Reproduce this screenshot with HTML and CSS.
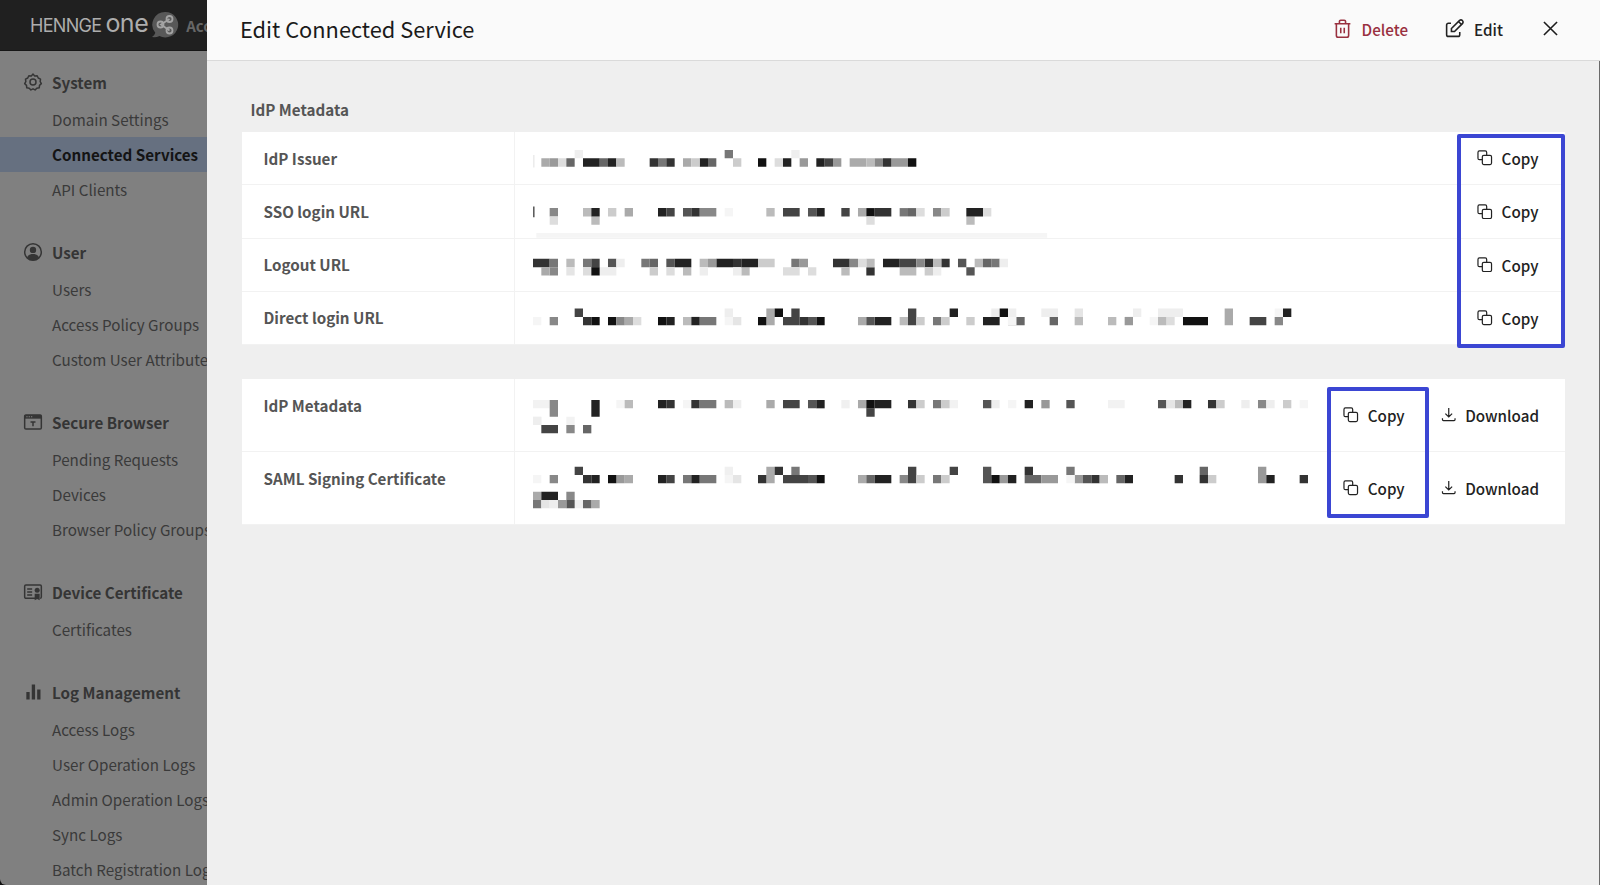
FILE: index.html
```html
<!DOCTYPE html>
<html lang="en">
<head>
<meta charset="utf-8">
<title>Edit Connected Service</title>
<link rel="stylesheet" href="styles.css">
</head>
<body>
<aside class="sidebar">
  <header class="brand">
    <span class="brand-henn">HENNGE</span><span class="brand-one">one</span>
    <svg class="brand-mark" viewBox="0 0 28 28" width="28" height="28"><path class="mark-bg" d="M14.5 1a12.7 12.7 0 1 1-6 23.9Q5 26.6 1 26q2.6-1.3 3.3-4.2A12.7 12.7 0 0 1 14.5 1z"/><path class="mark-line" d="M18.5 8 10 13.5l8.500 6"/><circle class="mark-line" cx="18.500" cy="8" r="3"/><circle class="mark-line" cx="9.500" cy="13.500" r="3"/><circle class="mark-line" cx="18.500" cy="19.500" r="3"/></svg>
    <span class="brand-app">Access</span>
  </header>
  <nav class="nav">
    <section class="group">
      <h2 class="group-head"><svg class="nav-icon" viewBox="0 0 24 24"><path class="line" d="M12 2.500l2 2.200 3-.2 1.300 2.700 2.700 1.400-.4 2.900 1.400 2.500-2.200 2-.3 3-3 .4-2 2.100-2.500-1.300-2.500 1.300-2-2.100-3-.4-.3-3-2.200-2 1.400-2.500-.4-2.900 2.700-1.400L7 4.500l3 .2z"/><circle class="line" cx="12" cy="12" r="3.600"/></svg>System</h2>
      <a class="nav-item">Domain Settings</a>
      <a class="nav-item active">Connected Services</a>
      <a class="nav-item">API Clients</a>
    </section>
    <section class="group">
      <h2 class="group-head"><svg class="nav-icon" viewBox="0 0 24 24"><circle class="line" cx="12" cy="12" r="10"/><circle class="solid" cx="12" cy="9.500" r="3.800"/><path class="solid" d="M4.800 18.500C6 15.500 9 14.500 12 14.500s6 1 7.200 4C17.500 20.700 15 22 12 22s-5.500-1.300-7.200-3.500z"/></svg>User</h2>
      <a class="nav-item">Users</a>
      <a class="nav-item">Access Policy Groups</a>
      <a class="nav-item">Custom User Attributes</a>
    </section>
    <section class="group">
      <h2 class="group-head"><svg class="nav-icon" viewBox="0 0 24 24"><rect class="line" x="2" y="3.500" width="20" height="17" rx="1.500"/><path class="solid" d="M2 3.500h20v4.500H2z"/><path class="dots" d="M4 5.700h1.500M6.800 5.700h1.500M9.600 5.700h1.500"/><path class="line" d="M9 12h6M12 12v5"/></svg>Secure Browser</h2>
      <a class="nav-item">Pending Requests</a>
      <a class="nav-item">Devices</a>
      <a class="nav-item">Browser Policy Groups</a>
    </section>
    <section class="group">
      <h2 class="group-head"><svg class="nav-icon" viewBox="0 0 24 24"><path class="line" d="M15 19.500H3.500A1.500 1.500 0 0 1 2 18V5a1.500 1.500 0 0 1 1.500-1.500h17A1.500 1.500 0 0 1 22 5v13a1.500 1.500 0 0 1-1.500 1.500"/><path class="line" d="M5 8.500h6M5 12h6M5 15.500h6"/><circle class="solid" cx="17" cy="10" r="3"/><path class="solid" d="M14 14h6v8l-3-1.500-3 1.500z"/></svg>Device Certificate</h2>
      <a class="nav-item">Certificates</a>
    </section>
    <section class="group">
      <h2 class="group-head"><svg class="nav-icon" viewBox="0 0 24 24"><path class="solid" d="M4 12h4v9H4zM10.500 3h4v18h-4zM17 9h4v12h-4z"/></svg>Log Management</h2>
      <a class="nav-item">Access Logs</a>
      <a class="nav-item">User Operation Logs</a>
      <a class="nav-item">Admin Operation Logs</a>
      <a class="nav-item">Sync Logs</a>
      <a class="nav-item">Batch Registration Logs</a>
    </section>
  </nav>
</aside>

<div class="drawer">
  <header class="drawer-head">
    <h1 class="drawer-title">Edit Connected Service</h1>
    <button class="head-btn danger"><svg class="icon-lg" viewBox="0 0 24 24"><path d="M3 6.500h18M8.500 6.500V4a1.500 1.500 0 0 1 1.500-1.500h4A1.500 1.500 0 0 1 15.500 4v2.500M5 6.500V20a2 2 0 0 0 2 2h10a2 2 0 0 0 2-2V6.500M10 11v6.500M14 11v6.500"/></svg>Delete</button>
    <button class="head-btn"><svg class="icon-lg" viewBox="0 0 24 24"><path d="M8 6H5a2 2 0 0 0-2 2v11a2 2 0 0 0 2 2h11a2 2 0 0 0 2-2v-3"/><path d="M21.300 6.200a2.500 2.500 0 0 0-3.500-3.500L8.500 12v3.500H12z"/><path d="M16.500 4l3.500 3.500"/></svg>Edit</button>
    <button class="close-btn" aria-label="Close"><svg class="icon-lg" viewBox="0 0 24 24"><path d="M4.500 4.500l15 15M19.500 4.500l-15 15"/></svg></button>
  </header>
  <main class="drawer-body">
    <h2 class="section-title">IdP Metadata</h2>

    <div class="panel">
      <div class="row">
        <div class="row-label">IdP Issuer</div>
        <div class="row-value"><svg class="mosaic" viewBox="0 -2.160 95 6.270"><path stroke="#e8e8e8" class="hair" d="M.1 .6v1.500"/><path stroke="#eee" d="M5 .5h1M31 .5h1"/><path stroke="#777" d="M23 .5h1M15 1.500h1"/><path stroke="#aaa" d="M1 1.500h1M18 1.500h1M38 1.500h2"/><path stroke="#999" d="M2 1.500h1M32 1.500h1M36 1.500h1M43 1.500h2"/><path stroke="#ddd" d="M3 1.500h1M29 1.500h1"/><path stroke="#666" d="M4 1.500h1M8 1.500h1M21 1.500h1"/><path stroke="#222" d="M6 1.500h2M9 1.500h1M20 1.500h1M30 1.500h1M34 1.500h1"/><path stroke="#111" d="M27 1.500h1M45 1.500h1"/><path stroke="#bbb" d="M10 1.500h1M40 1.500h1"/><path stroke="#333" d="M14 1.500h1M16 1.500h1M42 1.500h1"/><path stroke="#ccc" d="M19 1.500h1M24 1.500h1"/><path stroke="#444" d="M35 1.500h1"/><path stroke="#888" d="M41 1.500h1"/></svg></div>
        <button class="row-btn"><svg class="icon" viewBox="0 0 16 16"><path d="M5.500 10H2.500A1.500 1.500 0 0 1 1 8.500V2.500A1.500 1.500 0 0 1 2.500 1h6A1.500 1.500 0 0 1 10 2.500V5.500"/><rect x="5.500" y="5.500" width="9.500" height="9.500" rx="1.500"/></svg>Copy</button>
      </div>
      <div class="row">
        <div class="row-label">SSO login URL</div>
        <div class="row-value"><svg class="mosaic" viewBox="0 4.230 95 6.270"><path stroke="#f5f5f5" class="strip" d="M.4 10.280H61.700"/><path stroke="#333" class="hair" d="M.1 6.800v1.300"/><path stroke="#888" d="M2 7.500h1M20 7.500h2M48 7.500h1"/><path stroke="#bbb" d="M6 7.500h1M28 7.500h1M7 8.500h1M52 8.500h1"/><path stroke="#222" d="M7 7.500h1M15 7.500h1M34 7.500h1M52 7.500h2"/><path stroke="#ccc" d="M9 7.500h1M49 7.500h1"/><path stroke="#aaa" d="M11 7.500h1M39 7.500h1"/><path stroke="#444" d="M16 7.500h1M30 7.500h2M37 7.500h1"/><path stroke="#555" d="M18 7.500h1M33 7.500h1"/><path stroke="#333" d="M19 7.500h1M41 7.500h2"/><path stroke="#f5f5f5" d="M23 7.500h1"/><path stroke="#111" d="M40 7.500h1"/><path stroke="#777" d="M44 7.500h1"/><path stroke="#666" d="M45 7.500h1"/><path stroke="#ddd" d="M46 7.500h1M54 7.500h1M2 8.500h1M40 8.500h1"/></svg></div>
        <button class="row-btn"><svg class="icon" viewBox="0 0 16 16"><path d="M5.500 10H2.500A1.500 1.500 0 0 1 1 8.500V2.500A1.500 1.500 0 0 1 2.500 1h6A1.500 1.500 0 0 1 10 2.500V5.500"/><rect x="5.500" y="5.500" width="9.500" height="9.500" rx="1.500"/></svg>Copy</button>
      </div>
      <div class="row">
        <div class="row-label">Logout URL</div>
        <div class="row-value"><svg class="mosaic" viewBox="0 10.620 95 6.270"><path stroke="#333" d="M0 13.500h2M36 13.500h2M47 13.500h1M49 13.500h1M24 13.500h1M40 14.500h1"/><path stroke="#777" d="M2 13.500h1M6 13.500h1M13 13.500h1M31 13.500h1M55 13.500h1"/><path stroke="#bbb" d="M4 13.500h1M20 13.500h1M40 13.500h1M48 13.500h1M53 13.500h1M18 14.500h1M25 14.500h1M37 14.500h1M44 14.500h2"/><path stroke="#444" d="M7 13.500h1M44 13.500h2"/><path stroke="#555" d="M9 13.500h1M16 13.500h1M51 13.500h1M52 14.500h1"/><path stroke="#eee" d="M10 13.500h1M56 13.500h1M8 14.500h2M20 14.500h1M24 14.500h1M48 14.500h1"/><path stroke="#666" d="M14 13.500h1M54 13.500h1"/><path stroke="#222" d="M17 13.500h2M22 13.500h2M25 13.500h2M42 13.500h2"/><path stroke="#999" d="M21 13.500h1M32 13.500h1"/><path stroke="#ccc" d="M27 13.500h2M14 14.500h1M47 14.500h1"/><path stroke="#888" d="M38 13.500h1M46 13.500h1M2 14.500h1"/><path stroke="#ddd" d="M39 13.500h1M6 14.500h1M16 14.500h1M30 14.500h2M33 14.500h1"/><path stroke="#aaa" d="M1 14.500h1"/><path stroke="#e5e5e5" d="M4 14.500h1"/><path stroke="#111" d="M7 14.500h1"/></svg></div>
        <button class="row-btn"><svg class="icon" viewBox="0 0 16 16"><path d="M5.500 10H2.500A1.500 1.500 0 0 1 1 8.500V2.500A1.500 1.500 0 0 1 2.500 1h6A1.500 1.500 0 0 1 10 2.500V5.500"/><rect x="5.500" y="5.500" width="9.500" height="9.500" rx="1.500"/></svg>Copy</button>
      </div>
      <div class="row">
        <div class="row-label">Direct login URL</div>
        <div class="row-value"><svg class="mosaic" viewBox="0 17.010 95 6.270"><path stroke="#444" d="M5 19.500h1M31 19.500h1M45 19.500h1M30 20.500h2M45 20.500h1M86 20.500h2"/><path stroke="#eee" d="M23 19.500h1M55 19.500h1M57 19.500h1M61 19.500h2M72 19.500h1M75 19.500h3"/><path stroke="#aaa" d="M28 19.500h1M83 19.500h1M11 20.500h1M28 20.500h1M39 20.500h1M83 20.500h1"/><path stroke="#111" d="M29 19.500h1M56 19.500h1M9 20.500h1M7 20.500h1M15 20.500h1M27 20.500h1M34 20.500h1M78 20.500h3"/><path stroke="#222" d="M50 19.500h1M90 19.500h1M16 20.500h1M41 20.500h2M54 20.500h2"/><path stroke="#333" d="M6 20.500h1M32 20.500h1"/><path stroke="#888" d="M2 20.500h1M10 20.500h1M57 20.500h1M89 20.500h1"/><path stroke="#ddd" d="M12 20.500h1M76 20.500h1"/><path stroke="#bbb" d="M18 20.500h1M44 20.500h1M65 20.500h1M69 20.500h1M75 20.500h1"/><path stroke="#777" d="M20 20.500h2M48 20.500h1"/><path stroke="#222" d="M19 20.500h1"/><path stroke="#e5e5e5" d="M24 20.500h1M65 19.500h1"/><path stroke="#555" d="M33 20.500h1M40 20.500h1"/><path stroke="#ccc" d="M46 20.500h1M49 20.500h1M52 20.500h1"/><path stroke="#666" d="M58 20.500h1M62 20.500h1"/><path stroke="#999" d="M71 20.500h1"/><path stroke="#f5f5f5" d="M0 20.500h1M23 20.500h1M57 20.500h1M74 20.500h1M89 19.500h1"/></svg></div>
        <button class="row-btn"><svg class="icon" viewBox="0 0 16 16"><path d="M5.500 10H2.500A1.500 1.500 0 0 1 1 8.500V2.500A1.500 1.500 0 0 1 2.500 1h6A1.500 1.500 0 0 1 10 2.500V5.500"/><rect x="5.500" y="5.500" width="9.500" height="9.500" rx="1.500"/></svg>Copy</button>
      </div>
      <div class="callout callout-wide"></div>
    </div>

    <div class="panel panel-second">
      <div class="row row-tall">
        <div class="row-label">IdP Metadata</div>
        <div class="row-value"><svg class="mosaic mosaic-tall" viewBox="0 27.480 95 8.640"><path stroke="#f2f2f2" d="M0 30.500h2M50 30.500h1M69 30.500h2M0 32.500h1M4 32.500h1"/><path stroke="#888" d="M2 30.500h1M2 31.500h1M87 30.500h1M4 33.500h1"/><path stroke="#222" d="M7 30.500h1M7 31.500h1M15 30.500h1M41 30.500h2M59 30.500h1M78 30.500h1"/><path stroke="#f5f5f5" d="M10 30.500h1M18 30.500h1M57 30.500h1M92 30.500h1"/><path stroke="#bbb" d="M11 30.500h1M23 30.500h1M77 30.500h1"/><path stroke="#333" d="M16 30.500h1M19 30.500h1M45 30.500h1M81 30.500h1"/><path stroke="#777" d="M20 30.500h2M48 30.500h1"/><path stroke="#eee" d="M24 30.500h1M55 30.500h1M85 30.500h1M88 30.500h1M0 32.500h1"/><path stroke="#aaa" d="M28 30.500h1M39 30.500h1"/><path stroke="#444" d="M30 30.500h2M40 31.500h1M1 33.500h2"/><path stroke="#555" d="M33 30.500h1M54 30.500h1M64 30.500h1M75 30.500h1"/><path stroke="#f0f0f0" d="M37 30.500h1"/><path stroke="#111" d="M40 30.500h1"/><path stroke="#ccc" d="M46 30.500h1M49 30.500h1M82 30.500h1M90 30.500h1"/><path stroke="#999" d="M61 30.500h1"/><path stroke="#e5e5e5" d="M76 30.500h1"/><path stroke="#666" d="M6 33.500h1"/><path stroke="#222" d="M34 30.500h1"/></svg></div>
        <button class="row-btn"><svg class="icon" viewBox="0 0 16 16"><path d="M5.500 10H2.500A1.500 1.500 0 0 1 1 8.500V2.500A1.500 1.500 0 0 1 2.500 1h6A1.500 1.500 0 0 1 10 2.500V5.500"/><rect x="5.500" y="5.500" width="9.500" height="9.500" rx="1.500"/></svg>Copy</button>
        <button class="row-btn"><svg class="icon" viewBox="0 0 16 16"><path d="M8 1v9M4.500 6.800 8 10.300l3.500-3.500M1.500 11.500v1.500a1 1 0 0 0 1 1h11a1 1 0 0 0 1-1v-1.500"/></svg>Download</button>
      </div>
      <div class="row row-tall">
        <div class="row-label">SAML Signing Certificate</div>
        <div class="row-value"><svg class="mosaic mosaic-tall" viewBox="0 36.240 95 8.640"><path stroke="#444" d="M5 38.500h1M45 38.500h1M50 38.500h1M16 39.500h1M30 39.500h3M45 39.500h1"/><path stroke="#f0f0f0" d="M23 38.500h1M5 42.500h1"/><path stroke="#aaa" d="M28 38.500h1M28 39.500h1M39 39.500h1M11 39.500h1M0 41.500h1M7 42.500h1"/><path stroke="#333" d="M29 38.500h1M59 38.500h1M6 39.500h1M27 39.500h1M67 39.500h1M77 39.500h1M80 39.500h1M92 39.500h1"/><path stroke="#777" d="M31 38.500h1M64 38.500h1M18 39.500h1M20 39.500h2M48 39.500h1M0 42.500h1"/><path stroke="#555" d="M54 38.500h1M33 39.500h1M54 39.500h1M66 39.500h1M4 42.500h1"/><path stroke="#666" d="M80 38.500h1M40 39.500h1M59 39.500h2M70 39.500h1M6 42.500h1"/><path stroke="#999" d="M87 38.500h1M56 39.500h1M61 39.500h2M65 39.500h1M87 39.500h1M10 39.500h1M3 42.500h1"/><path stroke="#f5f5f5" d="M0 39.500h1M23 39.500h1M64 39.500h1"/><path stroke="#888" d="M2 39.500h1M44 39.500h1M4 41.500h1"/><path stroke="#222" d="M7 39.500h1M15 39.500h1M19 39.500h1M41 39.500h2M57 39.500h1M71 39.500h1M88 39.500h1M1 41.500h2"/><path stroke="#111" d="M9 39.500h1M34 39.500h1M55 39.500h1"/><path stroke="#e5e5e5" d="M24 39.500h1M1 42.500h1"/><path stroke="#ccc" d="M46 39.500h1M49 39.500h1M81 39.500h1"/><path stroke="#bbb" d="M68 39.500h1"/><path stroke="#eee" d="M2 42.500h1"/></svg></div>
        <button class="row-btn"><svg class="icon" viewBox="0 0 16 16"><path d="M5.500 10H2.500A1.500 1.500 0 0 1 1 8.500V2.500A1.500 1.500 0 0 1 2.500 1h6A1.500 1.500 0 0 1 10 2.500V5.500"/><rect x="5.500" y="5.500" width="9.500" height="9.500" rx="1.500"/></svg>Copy</button>
        <button class="row-btn"><svg class="icon" viewBox="0 0 16 16"><path d="M8 1v9M4.500 6.800 8 10.300l3.500-3.500M1.500 11.500v1.500a1 1 0 0 0 1 1h11a1 1 0 0 0 1-1v-1.500"/></svg>Download</button>
      </div>
      <div class="callout callout-narrow"></div>
    </div>
  </main>
</div>
</body>
</html>
```

FILE: styles.css
```css
* { box-sizing: border-box; }
html, body { height: 100%; }
body {
  margin: 0;
  width: 1600px;
  height: 885px;
  overflow: hidden;
  position: relative;
  background: #111;
  font-family: "Noto Sans CJK JP", "Noto Sans", sans-serif;
  font-size: 15.2px;
  color: #333;
}
button { font: inherit; border: 0; background: none; padding: 0; color: inherit; }

/* Sidebar (dimmed by the drawer's backdrop) */
.sidebar {
  width: 207px;
  height: 885px;
  background: #808080;
  border-bottom-left-radius: 6px;
  overflow: hidden;
}
.brand {
  height: 51px;
  display: flex;
  align-items: center;
  padding-left: 30px;
  background: #202020;
  border-bottom: 1px solid #161616;
  white-space: nowrap;
  color: #adadad;
}
.brand-henn { font-family: Inter, sans-serif; font-weight: 400; font-size: 18px; letter-spacing: -.7px; }
.brand-one { font-family: Inter, sans-serif; font-weight: 400; font-size: 25px; letter-spacing: -.5px; margin-left: 4px; line-height: 1; margin-top: -3px; }
.brand-mark { margin-left: 3px; flex: none; }
.mark-bg { fill: #585858; }
.mark-line { fill: none; stroke: #a4a4a4; stroke-width: 1.8; }
.brand-app { margin-left: 7px; font-size: 15px; font-weight: 700; color: #666; }

.nav { padding-top: 14px; }
.group { margin-bottom: 28px; }
.group-head {
  margin: 0;
  height: 37px;
  padding: 0 0 2.5px 23px;
  display: flex;
  align-items: center;
  gap: 9px;
  font-size: 15.2px;
  font-weight: 700;
  color: #353535;
  white-space: nowrap;
}
.nav-icon { width: 20px; height: 20px; flex: none; }
.line { fill: none; stroke: #353535; stroke-width: 1.8; stroke-linejoin: round; }
.solid { fill: #353535; }
.dots { fill: none; stroke: #808080; stroke-width: 1.4; }
.nav-item {
  display: flex;
  align-items: center;
  height: 35px;
  padding: 0 0 1px 52px;
  color: #3a3a3a;
  white-space: nowrap;
}
.nav-item.active { background: #667080; color: #141414; font-weight: 700; }

/* Drawer */
.drawer {
  position: absolute;
  left: 207px;
  top: 0;
  right: 0;
  bottom: 0;
  display: flex;
  flex-direction: column;
  background: #efefef;
  color: #1c1c1c;
}
.drawer-head {
  flex: none;
  height: 61px;
  display: flex;
  align-items: center;
  padding: 0 39px 3px 33px;
  background: #fafafa;
  border-bottom: 1px solid #dadada;
}
.drawer-title { margin: 0 auto 0 0; font-size: 21.8px; font-weight: 400; color: #1a1a1a; }
.head-btn { display: flex; align-items: center; gap: 9px; font-weight: 500; color: #222; margin-right: 36px; }
.head-btn + .head-btn { margin-right: 37px; }
.head-btn.danger { color: #99303f; }
.close-btn { display: flex; }
.icon-lg { width: 21px; height: 21px; fill: none; stroke: currentColor; stroke-width: 1.8; }

.drawer-body {
  flex: 1;
  padding: 36px 34px 0 34.5px;
  border-right: 1px solid #6a6a6a;
}
.section-title { margin: 0 0 11px 9px; font-size: 15.2px; line-height: 24px; font-weight: 700; color: #555; }

.panel { position: relative; background: #fff; }
.panel-second { margin-top: 34px; }
.row {
  display: flex;
  align-items: center;
  height: 53.25px;
  border-bottom: 1px solid #f2f2f2;
}
.row:last-of-type { border-bottom: 0; }
.row-tall { height: 73px; }
.row-label {
  flex: none;
  align-self: stretch;
  width: 273px;
  padding: 13.5px 0 0 22px;
  line-height: 24px;
  font-weight: 700;
  color: #555;
  border-right: 1px solid #f2f2f2;
}
.row-value { flex: 1; min-width: 0; align-self: stretch; padding-left: 18px; }
.mosaic { display: block; width: 791.67px; height: 52.25px; }
.mosaic-tall { height: 72px; }
.mosaic path { fill: none; stroke-width: 1; }
.mosaic .hair { stroke-width: .15; }
.mosaic .strip { stroke-width: .56; }
.row-btn {
  flex: none;
  display: flex;
  align-items: center;
  gap: 9px;
  padding-right: 26.5px;
  font-weight: 500;
  color: #222;
}
.row-tall .row-btn { padding-right: 26px; }
.row-tall .row-btn:nth-of-type(1) { padding-right: 36px; }
.icon { width: 15.5px; height: 15.5px; flex: none; fill: none; stroke: currentColor; stroke-width: 1.25; }

/* Highlight frames drawn over the screenshot */
.callout { position: absolute; border: 4px solid #3b46d3; border-radius: 2px; }
.callout-wide { top: 1.5px; right: 0; bottom: -3px; width: 108px; }
.callout-narrow { top: 7.5px; right: 136px; bottom: 7.5px; width: 102.5px; }
```
